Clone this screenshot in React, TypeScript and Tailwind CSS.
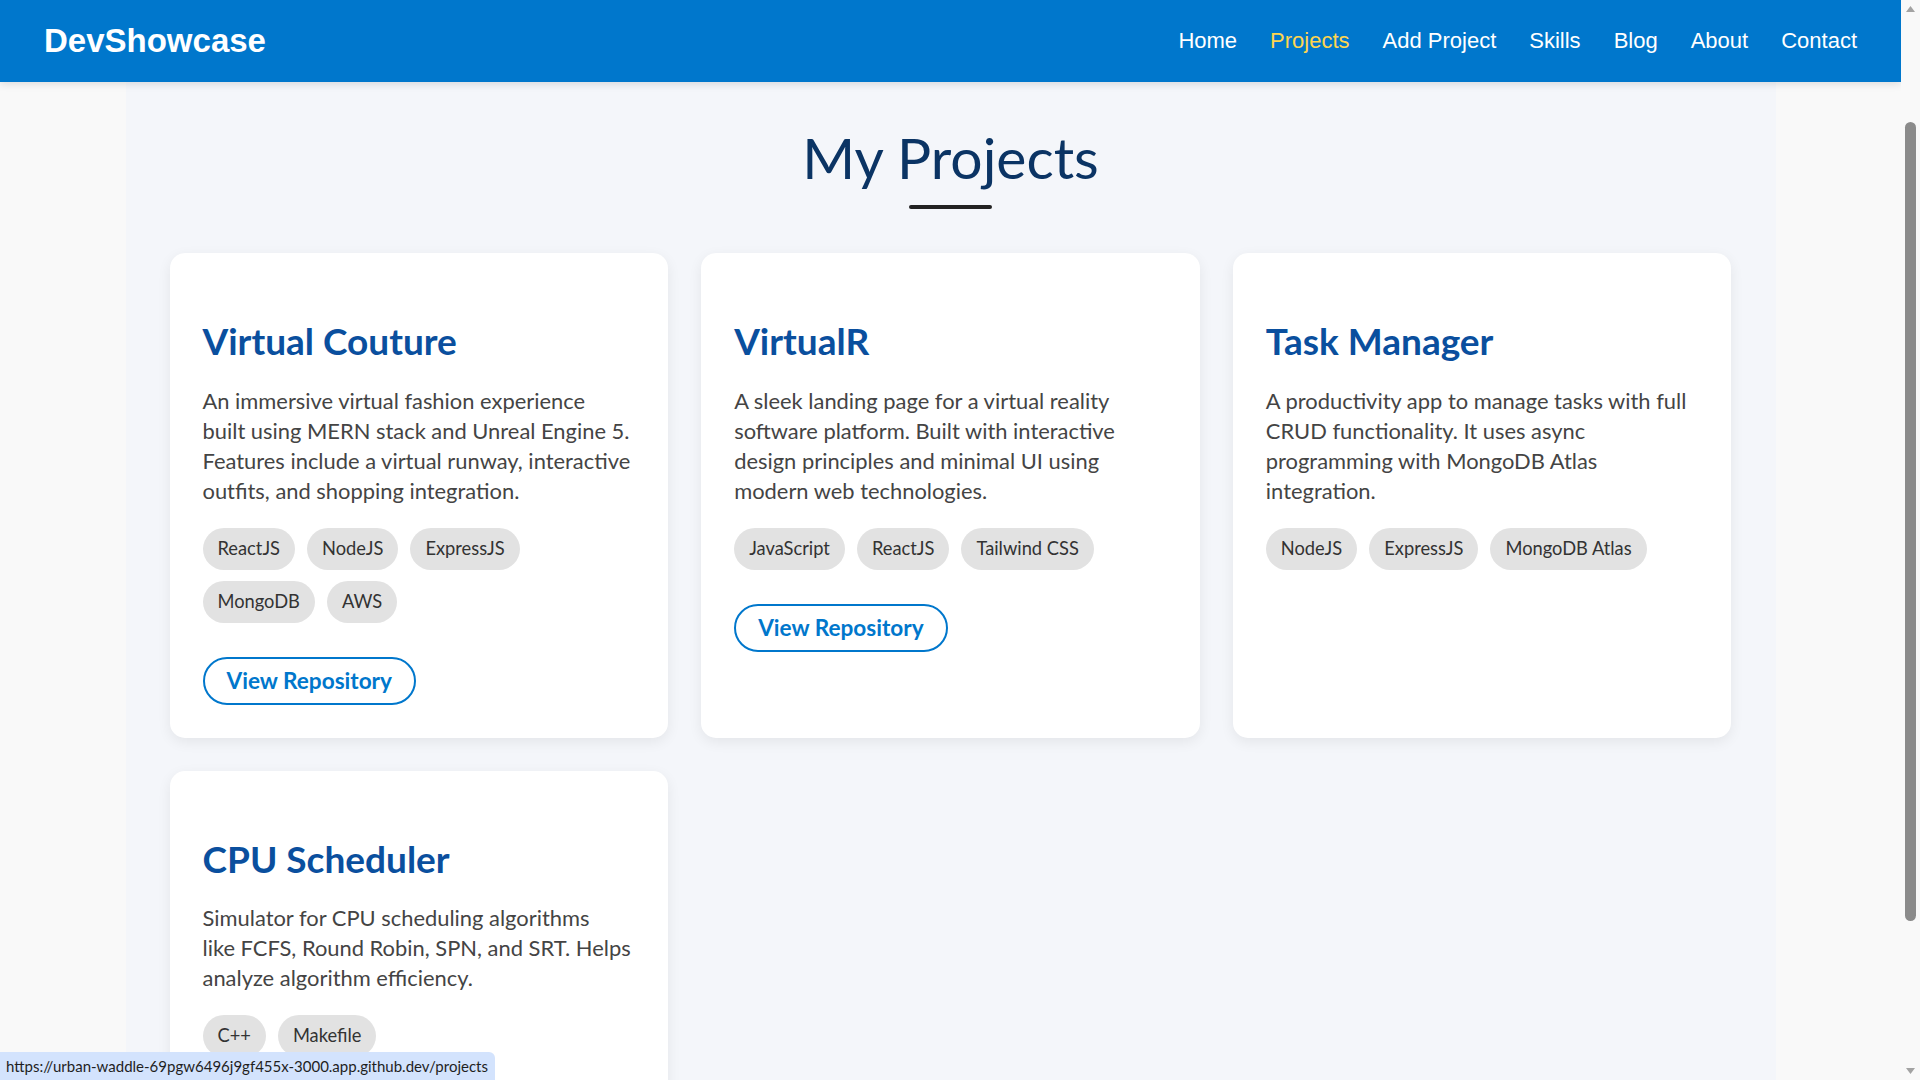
import React from 'react';

interface Project {
  id: number;
  title: string;
  lines: string[];
  tags: string[];
  repo: boolean;
}

const projects: Project[] = [
  {
    id: 1,
    title: 'Virtual Couture',
    lines: [
      'An immersive virtual fashion experience',
      'built using MERN stack and Unreal Engine 5.',
      'Features include a virtual runway, interactive',
      'outfits, and shopping integration.',
    ],
    tags: ['ReactJS', 'NodeJS', 'ExpressJS', 'MongoDB', 'AWS'],
    repo: true,
  },
  {
    id: 2,
    title: 'VirtualR',
    lines: [
      'A sleek landing page for a virtual reality',
      'software platform. Built with interactive',
      'design principles and minimal UI using',
      'modern web technologies.',
    ],
    tags: ['JavaScript', 'ReactJS', 'Tailwind CSS'],
    repo: true,
  },
  {
    id: 3,
    title: 'Task Manager',
    lines: [
      'A productivity app to manage tasks with full',
      'CRUD functionality. It uses async',
      'programming with MongoDB Atlas',
      'integration.',
    ],
    tags: ['NodeJS', 'ExpressJS', 'MongoDB Atlas'],
    repo: false,
  },
  {
    id: 4,
    title: 'CPU Scheduler',
    lines: [
      'Simulator for CPU scheduling algorithms',
      'like FCFS, Round Robin, SPN, and SRT. Helps',
      'analyze algorithm efficiency.',
    ],
    tags: ['C++', 'Makefile'],
    repo: true,
  },
];

const navLinks = ['Home', 'Projects', 'Add Project', 'Skills', 'Blog', 'About', 'Contact'];

function ProjectCard({ project }: { project: Project }) {
  return (
    <div className="bg-white rounded-[15px] shadow-[0_4px_14px_rgba(0,0,0,0.07)] px-[33px] pt-[33px] pb-[33px]">
      <h3 className="mt-[33px] text-[37px] leading-[1.2] font-bold text-[#0a4f9e]">{project.title}</h3>
      <p className="mt-[22px] text-[21.9px] leading-[30px] text-[#444]">
        {project.lines.map((line) => (
          <span key={line} className="block whitespace-nowrap">
            {line}
          </span>
        ))}
      </p>
      <div className="mt-[22px] flex flex-wrap gap-x-[12px] gap-y-[11px]">
        {project.tags.map((tag) => (
          <span
            key={tag}
            className="h-[42px] px-[15px] flex items-center rounded-full bg-[#e2e2e2] text-[18.3px] text-[#333]"
          >
            {tag}
          </span>
        ))}
      </div>
      {project.repo && (
        <button className="mt-[34px] h-[48px] px-[22px] rounded-full border-2 border-[#0077cc] text-[#0077cc] text-[22.6px] font-bold">
          View Repository
        </button>
      )}
    </div>
  );
}

export default function App() {
  return (
    <div className="h-screen flex overflow-hidden bg-[#f9f9f9] font-['Lato',sans-serif]">
      <div className="flex-1 flex flex-col overflow-hidden">
        <header className="h-[82px] shrink-0 bg-[#0077cc] px-[44px] flex items-center justify-between shadow-[0_2px_8px_rgba(0,0,0,0.12)] relative z-10 font-['Liberation_Sans',Arial,sans-serif]">
          <span className="text-white text-[33px] font-bold">DevShowcase</span>
          <nav className="flex items-center gap-[33px] -mt-[1px]">
            {navLinks.map((link) => (
              <a
                key={link}
                className={`text-[22px] ${link === 'Projects' ? 'text-[#ffd54f]' : 'text-white'}`}
              >
                {link}
              </a>
            ))}
          </nav>
        </header>

        <main className="flex-1 w-[1650px] mx-auto bg-[#f4f6fa] px-[44px] pt-[41px]">
          <h2 className="text-center text-[57px] leading-[1.2] text-[#0b3464]">My Projects</h2>
          <div className="mx-auto mt-[14px] w-[83px] h-[4px] rounded-full bg-[#222]" />
          <div className="mt-[44px] grid grid-cols-3 gap-[33px]">
            {projects.map((p) => (
              <ProjectCard key={p.id} project={p} />
            ))}
          </div>
        </main>
      </div>

      {/* fake browser scrollbar */}
      <div className="w-[19px] shrink-0 bg-[#f9f9f9] flex flex-col items-center">
        <svg width="11" height="8" viewBox="0 0 11 8" className="mt-[5px]">
          <path d="M5.5 1 L10 7 L1 7 Z" fill="#a3a3a3" />
        </svg>
        <div className="mt-[109px] w-[11px] h-[799px] rounded-full bg-[#8b8b8b]" />
        <div className="flex-1" />
        <svg width="11" height="8" viewBox="0 0 11 8" className="mb-[5px]">
          <path d="M1 1 L10 1 L5.5 7 Z" fill="#a3a3a3" />
        </svg>
      </div>

      {/* status bar overlay */}
      <div className="fixed bottom-0 left-0 h-[28px] w-[495px] bg-[#d3e3fd] rounded-tr-[6px] flex items-center pl-[6px] text-[15px] text-[#1f1f1f] font-['Lato',sans-serif]">
        https://urban-waddle-69pgw6496j9gf455x-3000.app.github.dev/projects
      </div>
    </div>
  );
}
